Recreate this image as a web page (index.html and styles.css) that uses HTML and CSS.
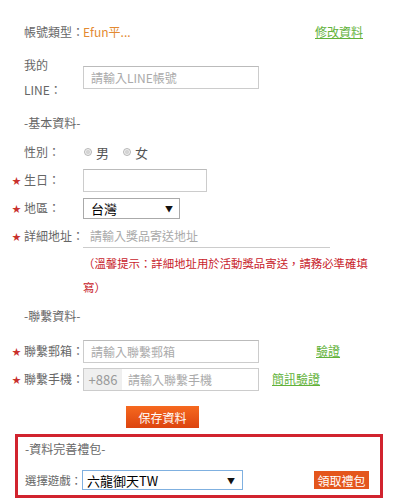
FILE: index.html
```html
<!DOCTYPE html>
<html lang="zh-Hant">
<head>
  <meta charset="UTF-8" />
  <meta name="viewport" content="width=device-width, initial-scale=1.0"/>
  <title>會員資料</title>
  <link rel="stylesheet" href="styles.css">
</head>
<body>
  <div class="profile">
    <div class="row row-account">
      <span class="star"></span>
      <span class="label">帳號類型：</span>
      <span class="account-type">Efun平...</span>
      <a class="link" href="#">修改資料</a>
    </div>

    <div class="row row-line">
      <span class="star"></span>
      <span class="label label-tall">我的<br>LINE：</span>
      <input class="field field-wide" type="text" placeholder="請輸入LINE帳號">
    </div>

    <div class="section-title">-基本資料-</div>

    <div class="row row-gender">
      <span class="star"></span>
      <span class="label">性別：</span>
      <label class="radio"><span class="dot"></span>男</label>
      <label class="radio"><span class="dot"></span>女</label>
    </div>

    <div class="row row-birthday">
      <span class="star">★</span>
      <span class="label">生日：</span>
      <input class="field field-date" type="text">
    </div>

    <div class="row row-region">
      <span class="star">★</span>
      <span class="label">地區：</span>
      <div class="select select-region">
        <select>
          <option>台灣</option>
          <option>香港</option>
        </select>
      </div>
    </div>

    <div class="row row-address">
      <span class="star">★</span>
      <span class="label">詳細地址：</span>
      <input class="field-line" type="text" placeholder="請輸入獎品寄送地址">
    </div>
    <p class="note">（溫馨提示：詳細地址用於活動獎品寄送，請務必準確填寫）</p>

    <div class="section-title section-contact">-聯繫資料-</div>

    <div class="row row-email">
      <span class="star">★</span>
      <span class="label">聯繫郵箱：</span>
      <input class="field field-wide" type="text" placeholder="請輸入聯繫郵箱">
      <a class="link link-email" href="#">驗證</a>
    </div>

    <div class="row row-phone">
      <span class="star">★</span>
      <span class="label">聯繫手機：</span>
      <div class="phone">
        <span class="prefix">+886</span>
        <input type="text" placeholder="請輸入聯繫手機">
      </div>
      <a class="link link-sms" href="#">簡訊驗證</a>
    </div>

    <button class="save-btn">保存資料</button>

    <div class="gift">
      <div class="gift-title">-資料完善禮包-</div>
      <div class="gift-row">
        <span class="gift-label">選擇遊戲：</span>
        <div class="select select-game">
          <select>
            <option>六龍御天TW</option>
          </select>
        </div>
        <button class="gift-btn">領取禮包</button>
      </div>
    </div>
  </div>
</body>
</html>
```

FILE: styles.css
```css
body {
  margin: 0;
  background-color: #fff;
  font-family: "Noto Sans CJK TC", "Noto Sans", sans-serif;
  font-size: 12px;
  color: #666;
}
.profile {
  width: 420px;
  box-sizing: border-box;
  padding: 20px 0 0 12px;
}
.row {
  display: flex;
  align-items: center;
}
.star {
  flex: none;
  width: 12px;
  font-size: 9px;
  line-height: 1;
  color: #c9302c;
}
.label {
  flex: none;
  width: 59px;
  line-height: 24px;
  white-space: nowrap;
}
.label-tall {
  line-height: 25px;
}
.account-type {
  width: 232px;
  color: #e38a31;
  line-height: 24px;
}
.link {
  color: #62b23a;
  text-decoration: underline;
  line-height: 20px;
}
.row-account { height: 24px; }
.row-line { height: 50px; margin-top: 8px; }
.row-gender { height: 22px; margin-top: 8px; }
.row-birthday { margin-top: 5px; }
.row-region { margin-top: 4px; }
.row-address { margin-top: 4px; }
.row-email { margin-top: 13px; }
.row-phone { margin-top: 4px; }

.field {
  box-sizing: border-box;
  height: 23px;
  border: 1px solid #ccc;
  border-top-color: #bbb;
  padding: 0 7px;
  font-family: inherit;
  font-size: 12px;
  color: #333;
  outline: none;
}
.field-wide { width: 176px; }
.field-date { width: 124px; }
.field::placeholder,
.field-line::placeholder,
.phone input::placeholder {
  color: #aaa;
}
.field-line {
  box-sizing: border-box;
  width: 247px;
  height: 24px;
  border: none;
  border-bottom: 1px solid #ccc;
  padding: 0 7px;
  font-family: inherit;
  font-size: 12px;
  outline: none;
}

.section-title {
  margin: 11px 0 0 12px;
  line-height: 20px;
}
.section-contact {
  margin-top: 7px;
}

.radio {
  display: flex;
  align-items: center;
  font-size: 13px;
  color: #555;
  margin-right: 13px;
}
.dot {
  width: 6px;
  height: 6px;
  border: 1px solid #b5b5b5;
  border-radius: 50%;
  background: radial-gradient(circle, #d4d4d4 0 40%, #f2f2f2 60%);
  margin: 0 4px 0 1px;
}

.select {
  position: relative;
  flex: none;
  box-sizing: border-box;
  border: 1px solid #aaa;
  background-color: #fff;
}
.select select {
  -webkit-appearance: none;
  appearance: none;
  width: 100%;
  height: 100%;
  border: none;
  background: transparent;
  padding: 0 0 0 7px;
  font-family: "Noto Sans CJK TC", sans-serif;
  font-size: 13px;
  color: #000;
  outline: none;
}
.select::after {
  content: "▼";
  position: absolute;
  top: 50%;
  right: 6px;
  transform: translateY(-50%);
  font-size: 8px;
  color: #111;
  pointer-events: none;
}
.select-region {
  width: 97px;
  height: 21px;
}
.select-game {
  width: 161px;
  height: 20px;
  border-color: #7fb0e0;
}
.select-game select {
  padding-left: 4px;
}
.select-game::after {
  right: 7px;
}

.note {
  margin: 3px 0 0 71px;
  width: 290px;
  line-height: 24px;
  font-size: 11.4px;
  color: #c8232c;
}

.link-email { margin-left: 57px; }
.link-sms { margin-left: 13px; }

.phone {
  display: flex;
  box-sizing: border-box;
  width: 176px;
  height: 23px;
  border: 1px solid #ccc;
}
.phone .prefix {
  width: 38px;
  background-color: #efefef;
  color: #999;
  font-size: 13px;
  line-height: 21px;
  text-align: center;
}
.phone input {
  flex: 1;
  min-width: 0;
  border: none;
  padding: 0 6px;
  font-family: inherit;
  font-size: 12px;
  outline: none;
}

.save-btn {
  display: block;
  width: 73px;
  height: 22px;
  margin: 15px 0 0 114px;
  border: none;
  padding: 0;
  background: linear-gradient(#f6691f, #dc440f);
  color: #fff;
  font-family: inherit;
  font-size: 12px;
  cursor: pointer;
}

.gift {
  box-sizing: border-box;
  width: 368px;
  height: 64px;
  margin: 6px 0 0 3px;
  border: 3px solid #d1232f;
  padding: 3px 0 0 7px;
}
.gift-title {
  line-height: 18px;
}
.gift-row {
  display: flex;
  align-items: center;
  margin-top: 12px;
}
.gift-label {
  flex: none;
  width: 57px;
  font-size: 11.4px;
  line-height: 20px;
  white-space: nowrap;
}
.gift-btn {
  flex: none;
  width: 55px;
  height: 18px;
  margin-left: 71px;
  border: none;
  padding: 0;
  background-color: #e4561c;
  color: #fff;
  font-family: inherit;
  font-size: 12px;
  cursor: pointer;
}
```
